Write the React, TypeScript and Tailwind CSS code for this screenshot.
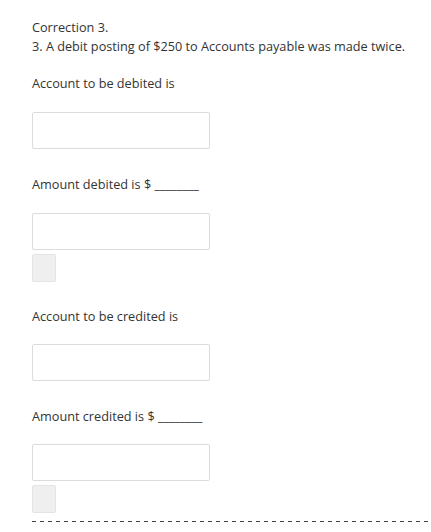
export default function App() {
  return (
    <div
      className="min-h-[532px] overflow-hidden bg-white px-8 pt-[18px] text-[12.7px] text-[#333]"
      style={{ fontFamily: '"Open Sans", "Noto Sans", sans-serif' }}
    >
      <p className="whitespace-nowrap leading-[19px]">Correction 3.</p>
      <p className="whitespace-nowrap leading-[19px]">3. A debit posting of $250 to Accounts payable was made twice.</p>

      <p className="mt-[18px] leading-[19px]">Account to be debited is</p>
      <div className="mt-[19px] h-[37px] w-[178px] rounded-[2px] border border-[#dcdcdc] bg-white" />

      <p className="mt-[26px] leading-[19px]">Amount debited is $ ________</p>
      <div className="mt-[19px] h-[37px] w-[178px] rounded-[2px] border border-[#dcdcdc] bg-white" />
      <div className="mt-[4px] h-[28px] w-[24px] rounded-[2px] border border-[#e4e4e4] bg-[#efefef]" />

      <p className="mt-[25px] leading-[19px]">Account to be credited is</p>
      <div className="mt-[18px] h-[37px] w-[178px] rounded-[2px] border border-[#dcdcdc] bg-white" />

      <p className="mt-[26px] leading-[19px]">Amount credited is $ ________</p>
      <div className="mt-[18px] h-[37px] w-[178px] rounded-[2px] border border-[#dcdcdc] bg-white" />
      <div className="mt-[4px] h-[28px] w-[24px] rounded-[2px] border border-[#e4e4e4] bg-[#efefef]" />

      {/* dashed separator */}
      <div className="-mr-8 mt-[8px] h-px bg-[repeating-linear-gradient(to_right,#444_0_4px,transparent_4px_8px)]" />
    </div>
  );
}
